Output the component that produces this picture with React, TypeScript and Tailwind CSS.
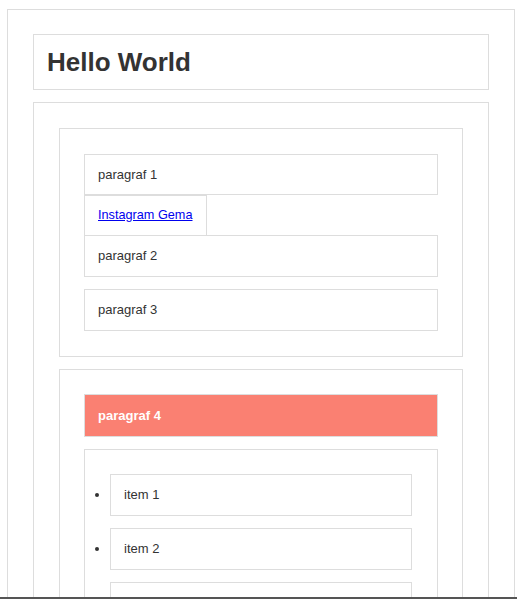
import React from 'react';

const box = 'border border-[#ddd]';
const para = `${box} px-[13px] py-3 text-[13px] leading-4 text-[#333]`;

export default function App() {
  const items = ['item 1', 'item 2', 'item 3', 'item 4'];

  return (
    <div className="min-h-screen bg-white font-['Liberation_Sans',Arial,sans-serif] text-[#333]">
      <div className={`${box} ml-[7px] mt-[9px] w-[508px] px-[25px] pt-6 pb-6`}>
        <h1 className={`${box} px-[13px] py-3 text-[26px] font-bold leading-[30px]`}>Hello World</h1>

        <div className={`${box} mt-3 px-[25px] pt-[25px] pb-6`}>
          {/* first section */}
          <section className={`${box} px-6 py-[25px]`}>
            <p className={`${box} px-[13px] py-3 text-[13px] leading-[15px]`}>paragraf 1</p>
            <div className="flex">
              <a
                href="#"
                className={`${box} px-[13px] py-3 text-[12.7px] leading-[15px] text-[#0000ee] underline`}
              >
                Instagram Gema
              </a>
            </div>
            <p className={`${para} -mt-px`}>paragraf 2</p>
            <p className={`${para} mt-3`}>paragraf 3</p>
          </section>

          {/* second section */}
          <section className={`${box} mt-3 px-6 py-6`}>
            <p className={`${box} bg-[#fa8072] px-[13px] py-[13px] text-[13px] font-bold leading-[15px] text-white`}>
              paragraf 4
            </p>
            <ul className={`${box} mt-3 list-disc px-[25px] py-6`}>
              {items.map((item, i) => (
                <li key={item} className={`${para} ${i > 0 ? 'mt-3' : ''} marker:text-[#333]`}>
                  {item}
                </li>
              ))}
            </ul>
          </section>
        </div>
      </div>

      <div className="fixed bottom-0 left-0 right-0 h-[2px] bg-[#555]" />
    </div>
  );
}
